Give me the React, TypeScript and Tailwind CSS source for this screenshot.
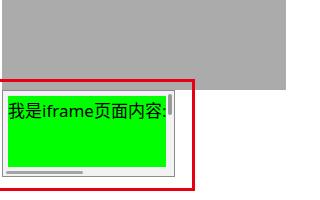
export default function App() {
  return (
    <div className="relative w-[320px] h-[200px] overflow-hidden bg-white" style={{ fontFamily: '"Noto Sans", "Noto Sans CJK SC", sans-serif' }}>
      <div className="ml-[2px] w-[284px] h-[90px] bg-[#ababab]" />
      <div className="relative ml-[2px] w-[173px] h-[87px] border border-[#8c8c8c] bg-[#f2f2f2] overflow-hidden">
        <div className="absolute left-[5px] top-[5px] w-[158px] h-[71px] bg-[#00ff00] overflow-hidden">
          <div className="whitespace-nowrap pt-[3px] text-[17px] leading-[24px] text-black">我是iframe页面内容:</div>
        </div>
        <div className="absolute left-[165px] top-[3px] w-[4px] h-[21px] rounded-full bg-[#9a9a9a]" />
        <div className="absolute left-[3px] top-[80px] w-[77px] h-[3px] rounded-full bg-[#a5a5a5]" />
      </div>
      <div className="absolute left-[-10px] top-[79px] w-[205px] h-[112px] border-[3px] border-[#e60012]" />
    </div>
  );
}
